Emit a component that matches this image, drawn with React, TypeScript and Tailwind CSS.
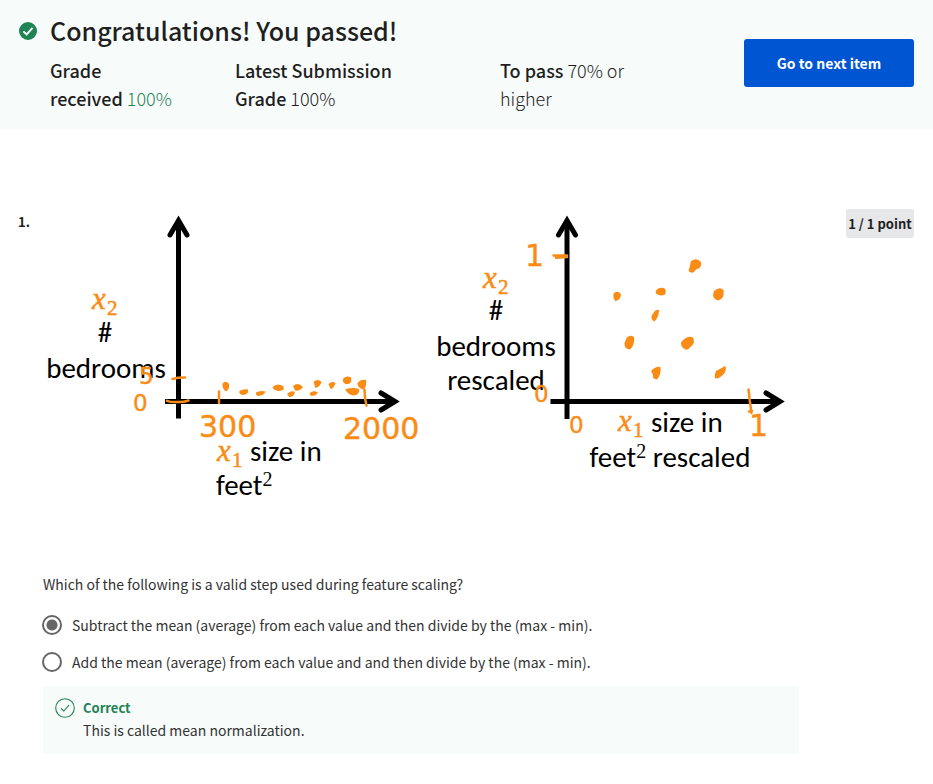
import type { ReactNode } from "react";

const orange = "#fa8c16";

function PassedIcon() {
  return (
    <svg viewBox="0 0 18 18" className="mt-[22px] h-[18px] w-[18px] shrink-0" aria-hidden="true">
      <circle cx="9" cy="9" r="9" fill="#1f8354" />
      <path d="M4.4 9.4 7.6 12.4 13.6 5.9" fill="none" stroke="#fff" strokeWidth="1.9" />
    </svg>
  );
}

function CorrectIcon() {
  return (
    <svg viewBox="0 0 20 20" className="h-5 w-5 shrink-0" aria-hidden="true">
      <circle cx="10" cy="10" r="9.3" fill="none" stroke="#1f8354" strokeWidth="1.1" />
      <path d="M6 10.3 8.8 13 14 7.2" fill="none" stroke="#1f8354" strokeWidth="1.1" />
    </svg>
  );
}

function Label({ x, y, children, middle }: { x: number; y: number; children: ReactNode; middle?: boolean }) {
  return (
    <text
      x={x}
      y={y}
      textAnchor={middle ? "middle" : "start"}
      className="fill-black font-['Carlito','Lato',sans-serif] text-[29px]"
    >
      {children}
    </text>
  );
}

function Variable({ x, y, index }: { x: number; y: number; index: string }) {
  return (
    <g fill={orange} stroke={orange} strokeWidth="0.5" className="font-['Liberation_Serif',serif]">
      <text x={x} y={y} className="text-[31px] italic">x</text>
      <text x={x + 15} y={y + 6} className="text-[21px]">{index}</text>
    </g>
  );
}

function Handwritten({ x, y, children, small }: { x: number; y: number; children: string; small?: boolean }) {
  return (
    <text
      x={x}
      y={y}
      fill={orange}
      stroke={orange}
      strokeWidth="0.4"
      className={small ? "font-['DejaVu_Sans',sans-serif] text-[23px]" : "font-['DejaVu_Sans',sans-serif] text-[30px]"}
    >
      {children}
    </text>
  );
}

function Charts() {
  return (
    <svg viewBox="43 205 756 300" className="h-auto w-full" role="img" aria-label="Bedrooms against size, before and after rescaling">
      <Label x={105} y={342} middle>#</Label>
      <Label x={106} y={378} middle>bedrooms</Label>
      <Label x={250} y={461}>size in</Label>
      <Label x={216} y={495}>feet<tspan dy="-9" className="font-['Liberation_Serif',serif] text-[20px]">2</tspan></Label>
      <Label x={496} y={320} middle>#</Label>
      <Label x={496} y={356} middle>bedrooms</Label>
      <Label x={496} y={390} middle>rescaled</Label>
      <Label x={651} y={432}>size in</Label>
      <Label x={670} y={467} middle>
        feet<tspan dy="-9" className="font-['Liberation_Serif',serif] text-[20px]">2</tspan>
        <tspan dy="9"> rescaled</tspan>
      </Label>

      <g fill="none" stroke="#000" strokeWidth="5">
        <path d="M178.500 222V418.500M165 401.500H394" />
        <path d="M567 222V419M550.500 401.500H779" />
        <g strokeLinecap="round">
          <path d="M170 235 178.500 220.500 187 235M381 393 395 401.500 381 410" />
          <path d="M558.500 235 567 220.500 575.500 235M766 393 780 401.500 766 410" />
        </g>
      </g>

      <Variable x={92} y={309} index="2" />
      <Variable x={217} y={461} index="1" />
      <Variable x={483} y={288} index="2" />
      <Variable x={618} y={431} index="1" />

      <Handwritten x={139} y={384} small>5</Handwritten>
      <Handwritten x={133} y={411} small>0</Handwritten>
      <Handwritten x={199} y={437}>300</Handwritten>
      <Handwritten x={343} y={439}>2000</Handwritten>
      <Handwritten x={525} y={266}>1</Handwritten>
      <Handwritten x={534} y={402} small>0</Handwritten>
      <Handwritten x={569} y={433} small>0</Handwritten>
      <Handwritten x={749} y={436}>1</Handwritten>

      <g fill="none" stroke={orange} strokeWidth="2.500" strokeLinecap="round" strokeLinejoin="round">
        <path d="M172.500 379 178 377.800 185 377.500M167 400.800Q171 402.400 177 402 183 402.400 188.500 400.500" />
        <path d="M219 391.500V403M364.500 389.500Q364.500 398 366.500 405.500" />
        <path d="M553.500 255.500H567M556 257.800 567 257" />
        <path d="M748.500 389.500 749.800 401 751.500 413M749 411.500 752 411" />
      </g>

      <g fill={orange}>
        <path d="M222.500 383.500Q226 380 229 384 230 389 226 391.500 222 389 222.500 383.500Z" />
        <path d="M239.500 391Q243 388.500 248 389.500 249 394.500 242.500 395 238.500 394 239.500 391Z" />
        <path d="M256 392.500Q260 390 265.500 391.500 264 395.500 258 396 255.500 395 256 392.500Z" />
        <path d="M272.500 387Q277 382.500 283 386 286 390.500 279 391 273 390.500 272.500 387Z" />
        <path d="M287 394Q291 390 295 392 294 397 289.500 397.300Z" />
        <path d="M293 386Q298 381.500 303 387 300 391.500 295 390.500Z" />
        <path d="M309.500 393.500Q313 389.500 318 392.500 316 396 311 396Z" />
        <path d="M313.500 382Q318 378 321.500 382 320 387 315.500 388Z" />
        <path d="M328.500 384Q332 380.500 335.500 383 334 388.500 330.500 389Z" />
        <path d="M343 379Q346 375 351 377.500 353 385 345.500 384 342 382 343 379Z" />
        <path d="M345 389.500Q352 387 359 389 360 393 356 395 350 397 345 389.500Z" />
        <path d="M357.500 383Q361 378.500 366 380 367 388 363 389.500 357 387 357.500 383Z" />
        <path d="M614 293Q619 290 621 294.500 620.500 300 615.500 301.200 612 297 614 293Z" />
        <path d="M656 291Q658 287 664 288 667 290 665 294.500 659 297 655.500 293Z" />
        <path d="M654 312Q656 309 659 310 659 317 654.500 321.500 651 320 651.500 316Z" />
        <path d="M626.500 338Q630 334 634 337 635 345 630 349.500 624 349 624.500 343Z" />
        <path d="M651 371Q656 366 660.500 367 661.500 374 657 379.500 652 379 653 375Z" />
        <path d="M691 261Q697 257 701 262 702 268 696 269.500 693 275 688.500 271 690 266 691 261Z" />
        <path d="M714 291Q720 286 723.500 290 725 299 718 300.500 711 299 714 291Z" />
        <path d="M682 341Q688 335 693 337.500 696 343 690 347.500 687 352 682 347 680 343 682 341Z" />
        <path d="M716 371Q720 369 725 366 727 368 724.500 373 719 380 715 378 714 375 716 371Z" />
      </g>
    </svg>
  );
}

function Option({ text, checked }: { text: string; checked?: boolean }) {
  return (
    <label className="flex h-[37px] items-center gap-[10px] text-[14px] leading-5 text-[#333]">
      <input
        type="radio"
        name="scaling-step"
        defaultChecked={checked}
        className="-ml-px h-5 w-5 shrink-0 appearance-none rounded-full border-2 border-[#666] bg-white checked:bg-[radial-gradient(circle,#666_0_5px,transparent_6px)]"
      />
      {text}
    </label>
  );
}

export default function App() {
  return (
    <div className="min-h-screen bg-white font-['Source_Sans_Pro','Noto_Sans_CJK_SC',sans-serif] text-[#1f1f1f]">
      <header className="flex items-start bg-[#f7fbfa] pr-[19px] pb-[17px] pl-[19px]">
        <PassedIcon />
        <div className="ml-[13px] flex-1">
          <h1 className="mt-[10px] text-[25px] leading-10 font-medium">Congratulations! You passed!</h1>
          <div className="mt-[6px] grid grid-cols-[185fr_265fr_244fr] text-[18px] leading-7 font-light">
            <p><span className="font-medium">Grade<br />received</span> <span className="text-[#1f8354]">100%</span></p>
            <p><span className="font-medium">Latest Submission<br />Grade</span> 100%</p>
            <p><span className="font-medium">To pass</span> 70% or<br />higher</p>
          </div>
        </div>
        <button type="button" className="mt-[39px] h-12 w-[170px] shrink-0 rounded-[3px] bg-[#0056d2] text-[14px] font-bold text-white">
          Go to next item
        </button>
      </header>

      <main className="flex items-start pt-[76px] pr-[19px] pl-[18px]">
        <span className="mt-[7px] w-[25px] shrink-0 text-[13px] leading-5 font-bold">1.</span>
        <div className="mr-[47px] flex-1">
          <Charts />
          <fieldset className="mt-[69px]">
            <legend className="mb-3 text-[14px] leading-5 text-[#333]">Which of the following is a valid step used during feature scaling?</legend>
            <Option text="Subtract the mean (average) from each value and then divide by the (max - min)." checked />
            <Option text="Add the mean (average) from each value and and then divide by the (max - min)." />
          </fieldset>
          <div className="mt-[6px] flex gap-2 bg-[#f7fbfa] px-3 py-3">
            <CorrectIcon />
            <div>
              <p className="text-[13px] leading-5 font-bold text-[#1f8354]">Correct</p>
              <p className="text-[14px] leading-6 text-[#333]">This is called mean normalization.</p>
            </div>
          </div>
        </div>
        <span className="mt-1 flex h-[29px] w-[68px] shrink-0 items-center justify-center rounded-[3px] bg-[#e5e7e8] text-[13px] font-bold whitespace-nowrap">
          1 / 1 point
        </span>
      </main>
    </div>
  );
}
